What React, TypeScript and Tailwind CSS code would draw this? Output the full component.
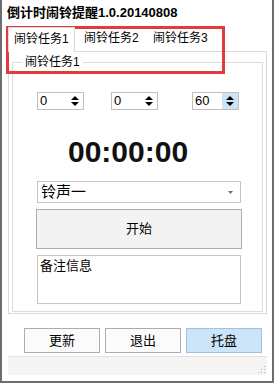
const ui = { fontFamily: '"Liberation Sans", "Noto Sans CJK SC", sans-serif' };

function SpinArrows() {
  return (
    <svg width="8" height="12" viewBox="0 0 8 12">
      <polygon points="0,5 4,1 8,5" fill="#000" />
      <polygon points="0,7 8,7 4,11" fill="#000" />
    </svg>
  );
}

function SpinBox({ value, className, active }: { value: string; className: string; active?: boolean }) {
  return (
    <div className={`flex h-[18px] w-[47px] border border-[#bfbfbf] bg-white ${className}`}>
      <span className="flex-1 pl-[2px] text-[13px] leading-[16px]">{value}</span>
      <div className={`flex w-[16px] items-center justify-center ${active ? 'bg-[#cce4f7]' : ''}`}>
        <SpinArrows />
      </div>
    </div>
  );
}

export default function App() {
  const tabs = ['闹铃任务1', '闹铃任务2', '闹铃任务3'];

  return (
    <div
      className="relative flex h-[383px] w-[274px] flex-col border-x-2 border-b-2 border-[#6e6e6e] bg-white text-black"
      style={ui}
    >
      <div className="h-[27px] pl-[5px] pt-[5px] text-[13px] font-bold leading-[16px]">倒计时闹铃提醒1.0.20140808</div>

      <div className="ml-[6px] w-[259px]">
        <div className="flex h-[24px] text-[12px] leading-[23px]">
          {tabs.map((t, i) => (
            <div
              key={t}
              className={
                i === 0
                  ? 'relative z-10 -mb-px w-[67px] border-x border-t border-[#d9d9d9] bg-white pl-[5px]'
                  : 'w-[69px] pl-[9px]'
              }
            >
              {t}
            </div>
          ))}
        </div>

        <div className="flex h-[263px] flex-col border border-[#d9d9d9] px-[3px] pb-px pt-[3px]">
          <fieldset className="flex flex-1 flex-col border border-[#dcdcdc]">
            <legend className="ml-[9px] px-[3px] text-[12px] leading-[14px]">闹铃任务1</legend>

            <div className="mt-[23px] flex">
              <SpinBox value="0" className="ml-[24px]" />
              <SpinBox value="0" className="ml-[27px]" />
              <SpinBox value="60" className="ml-[34px]" active />
            </div>

            <div className="mt-[27px] pl-[55px] text-[30px] font-bold leading-[30px] text-[#111]">00:00:00</div>

            <div className="ml-[24px] mt-[14px] flex h-[22px] w-[204px] items-center border border-[#c4c4c4] bg-white">
              <span className="flex-1 pl-[3px] text-[15px] leading-[20px]">铃声一</span>
              <svg width="5" height="3" viewBox="0 0 5 3" className="mr-[7px]">
                <polygon points="0,0 5,0 2.5,3" fill="#707070" />
              </svg>
            </div>

            <button className="ml-[23px] mt-[6px] h-[40px] w-[206px] border border-[#adadad] bg-[#f3f3f3] text-[13px]">
              开始
            </button>

            <div className="ml-[24px] mt-[6px] h-[49px] w-[204px] border border-[#c4c4c4] bg-white pl-[2px] pt-[2px] text-[13px] leading-[15px]">
              备注信息
            </div>
          </fieldset>
        </div>
      </div>

      <div className="ml-[22px] mt-[14px] flex gap-[5px] text-[13px]">
        <button className="h-[25px] w-[76px] border border-[#adadad] bg-[#fbfbfb]">更新</button>
        <button className="h-[25px] w-[76px] border border-[#adadad] bg-[#fbfbfb]">退出</button>
        <button className="h-[25px] w-[76px] border border-[#9fc2e2] bg-[#cce4f7]">托盘</button>
      </div>

      <div className="ml-[6px] mt-[3px] flex h-[19px] w-[259px] items-end justify-end border-t border-[#e3e3e3] bg-[#f7f5f4] pb-[2px] pr-[2px]">
        <svg width="7" height="7" viewBox="0 0 7 7">
          {[
            [5, 0],
            [5, 3],
            [2, 3],
            [5, 6],
            [2, 6],
            [-1, 6],
          ].map(([x, y]) => (
            <rect key={`${x}-${y}`} x={x + 1} y={y} width="1" height="1" fill="#b0b0b0" />
          ))}
        </svg>
      </div>

      <div className="pointer-events-none absolute left-[4px] top-[26px] h-[48px] w-[219px] border-[3px] border-[#e23b3b]" />
    </div>
  );
}
